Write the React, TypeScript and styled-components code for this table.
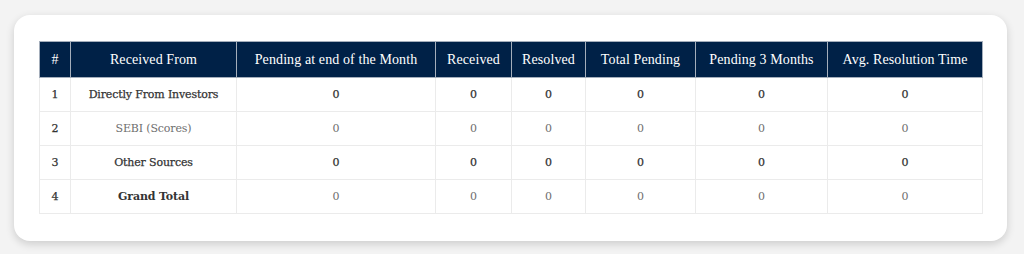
import React from "react";
import styled, { createGlobalStyle } from "styled-components";

const GlobalStyle = createGlobalStyle`
  html, body {
    margin: 0;
    background: #f3f3f3;
  }
  body {
    padding: 15px 17px 14px 14px;
    font-family: "Liberation Serif", "DejaVu Serif", serif;
  }
`;

type Row = {
  no: number;
  source: string;
  values: number[];
  tone: "strong" | "muted" | "total";
};

const headers = [
  "#",
  "Received From",
  "Pending at end of the Month",
  "Received",
  "Resolved",
  "Total Pending",
  "Pending 3 Months",
  "Avg. Resolution Time",
];

const widths = [31, 166, 199, 76, 74, 110, 132, 155];

const rows: Row[] = [
  { no: 1, source: "Directly From Investors", values: [0, 0, 0, 0, 0, 0], tone: "strong" },
  { no: 2, source: "SEBI (Scores)", values: [0, 0, 0, 0, 0, 0], tone: "muted" },
  { no: 3, source: "Other Sources", values: [0, 0, 0, 0, 0, 0], tone: "strong" },
  { no: 4, source: "Grand Total", values: [0, 0, 0, 0, 0, 0], tone: "total" },
];

const App = () => {
  return (
    <>
      <GlobalStyle />
      <Card>
        <Table>
          <colgroup>
            {widths.map((w, i) => (
              <col key={i} style={{ width: w }} />
            ))}
          </colgroup>
          <thead>
            <tr>
              {headers.map((h) => (
                <HeadCell key={h}>{h}</HeadCell>
              ))}
            </tr>
          </thead>
          <tbody>
            {rows.map((row) => (
              <BodyRow key={row.no}>
                <Cell $strong>{row.no}</Cell>
                <Cell $strong={row.tone !== "muted"} $bold={row.tone === "total"}>
                  {row.source}
                </Cell>
                {row.values.map((v, i) => (
                  <Cell key={i} $strong={row.tone === "strong"}>
                    {v}
                  </Cell>
                ))}
              </BodyRow>
            ))}
          </tbody>
        </Table>
      </Card>
    </>
  );
};

export default App;

const Card = styled.div`
  width: 993px;
  box-sizing: border-box;
  background: #ffffff;
  border-radius: 16px;
  padding: 26px 25px 27px 25px;
  box-shadow: 0 3px 8px rgba(0, 0, 0, 0.16);
`;

const Table = styled.table`
  width: 943px;
  table-layout: fixed;
  border-collapse: collapse;
`;

const HeadCell = styled.th`
  height: 36px;
  padding: 0 4px;
  background: #002147;
  color: #ffffff;
  font-family: "Liberation Serif", serif;
  font-weight: 400;
  font-size: 14px;
  letter-spacing: 0.1px;
  text-align: center;
  border: 1px solid #a4aebb;
  box-sizing: border-box;
  white-space: nowrap;
`;

const BodyRow = styled.tr`
  height: 34px;
`;

const Cell = styled.td<{ $strong?: boolean; $bold?: boolean }>`
  padding: 0 4px;
  text-align: center;
  border: 1px solid #ebebeb;
  font-family: "DejaVu Serif", "Liberation Serif", serif;
  font-size: 11px;
  letter-spacing: -0.15px;
  color: ${(p) => (p.$strong ? "#333333" : "#6e6e6e")};
  font-weight: ${(p) => (p.$bold ? 700 : 400)};
  -webkit-text-stroke: ${(p) => (p.$strong && !p.$bold ? "0.25px #333333" : "0")};
  white-space: nowrap;
`;
